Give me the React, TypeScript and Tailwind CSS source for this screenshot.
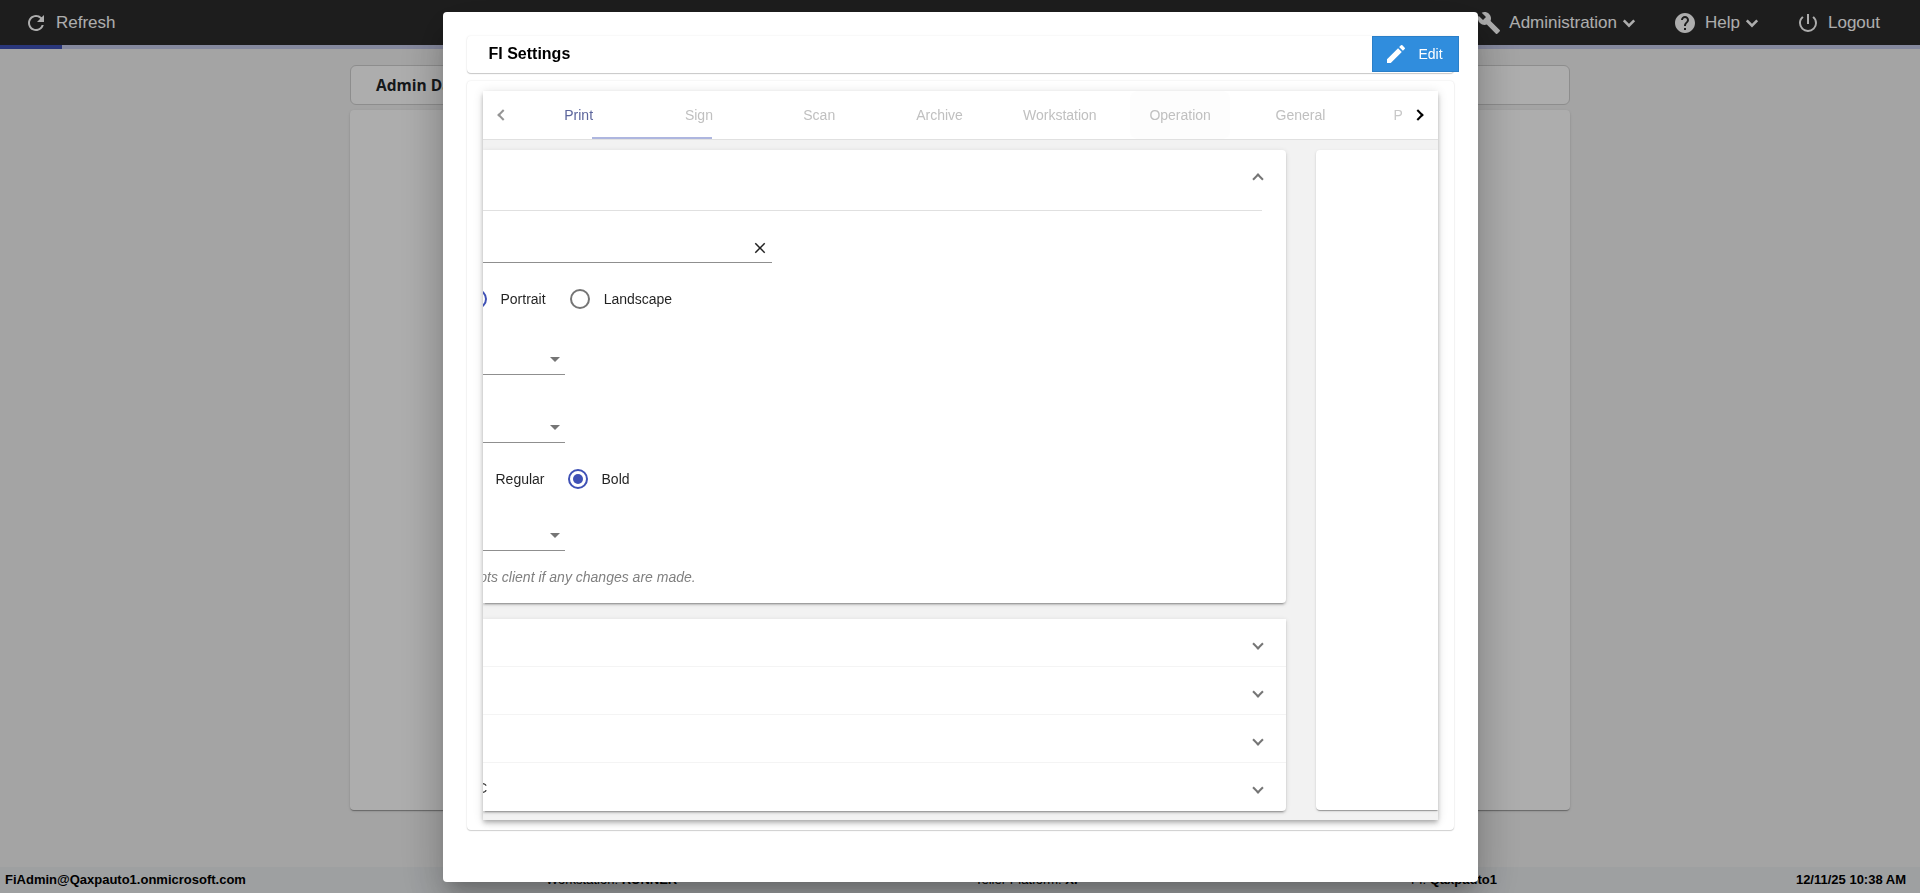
import { useState } from 'react';
import { clsx } from 'clsx';
import {
  MdArrowDropDown,
  MdBuild,
  MdClose,
  MdEdit,
  MdHelp,
  MdPowerSettingsNew,
  MdRefresh,
} from 'react-icons/md';

const TABS = ['Print', 'Sign', 'Scan', 'Archive', 'Workstation', 'Operation', 'General'];

const PANELS = ['', '', '', 'C'];

function MenuArrow() {
  return (
    <svg width="24" height="24" viewBox="0 0 24 24" fill="none" stroke="currentColor" strokeWidth="2.6">
      <path d="M6.8 9.4 12 14.6 17.2 9.4" />
    </svg>
  );
}

function Toolbar() {
  return (
    <header className="flex h-[45px] shrink-0 items-center bg-[#2c2c2c] pb-2 pl-6 pr-10 pt-2 text-[17px] text-white">
      <button className="flex items-center gap-2">
        <MdRefresh size={24} />
        Refresh
      </button>
      <nav className="ml-auto flex items-center">
        <button className="flex items-center">
          <MdBuild size={24} />
          <span className="ml-2">Administration</span>
          <MenuArrow />
        </button>
        <button className="ml-8 flex items-center">
          <MdHelp size={24} />
          <span className="ml-2">Help</span>
          <MenuArrow />
        </button>
        <button className="ml-8 flex items-center">
          <MdPowerSettingsNew size={24} />
          <span className="ml-2">Logout</span>
        </button>
      </nav>
    </header>
  );
}

function StatusBar() {
  return (
    <footer className="mt-auto flex h-[26px] shrink-0 items-center whitespace-nowrap bg-[#e9ecee] pl-[5px] pr-3.5 text-[13px] text-black">
      <b className="w-[541px]">FiAdmin@Qaxpauto1.onmicrosoft.com</b>
      <span className="w-[429px]">
        Workstation: <b>RUNNER</b>
      </span>
      <span className="w-[436px]">
        Teller Platform: <b>XP</b>
      </span>
      <span>
        FI: <b>Qaxpauto1</b>
      </span>
      <b className="ml-auto">12/11/25 10:38 AM</b>
    </footer>
  );
}

function Chevron({ className }: { className: string }) {
  return <span className={clsx('block size-2 shrink-0 border-b-2 border-r-2', className)} />;
}

function Radio({ label, checked, onChange }: { label: string; checked: boolean; onChange: () => void }) {
  return (
    <label className="flex items-center">
      <input type="radio" className="sr-only" checked={checked} onChange={onChange} />
      <span
        className={clsx(
          'flex size-5 items-center justify-center rounded-full border-2',
          checked ? 'border-[#3f51b5]' : 'border-[#757575]',
        )}
      >
        {checked && <span className="size-2.5 rounded-full bg-[#3f51b5]" />}
      </span>
      <span className="ml-3.5">{label}</span>
    </label>
  );
}

function Select() {
  return (
    <div className="flex h-8 w-[82px] items-start justify-end border-b border-[#8f8f8f]">
      <MdArrowDropDown size={24} className="-mr-0.5 mt-1 text-[#757575]" />
    </div>
  );
}

function PrintSettings() {
  const [orientation, setOrientation] = useState('portrait');
  const [weight, setWeight] = useState('bold');

  return (
    <section className="h-[453px] rounded-r bg-white pr-6 shadow-[0_3px_1px_-2px_rgba(0,0,0,0.2),0_2px_2px_0_rgba(0,0,0,0.14),0_1px_5px_0_rgba(0,0,0,0.12)]">
      <div className="flex h-[61px] items-center justify-end border-b border-[#e0e0e0] pb-0.5">
        <Chevron className="rotate-[225deg] border-[#757575]" />
      </div>
      <div className="mt-[26px] flex h-[26px] w-[289px] justify-end border-b border-[#8f8f8f] pr-[3px]">
        <MdClose size={18} className="mt-0.5 text-black/87" />
      </div>
      <div className="-ml-4 mt-[26px] flex h-5 items-center gap-6">
        <Radio label="Portrait" checked={orientation === 'portrait'} onChange={() => setOrientation('portrait')} />
        <Radio label="Landscape" checked={orientation === 'landscape'} onChange={() => setOrientation('landscape')} />
      </div>
      <div className="mt-[34px]">
        <Select />
      </div>
      <div className="mt-9">
        <Select />
      </div>
      <div className="-ml-[21px] mt-[26px] flex h-5 items-center gap-[23px]">
        <Radio label="Regular" checked={weight === 'regular'} onChange={() => setWeight('regular')} />
        <Radio label="Bold" checked={weight === 'bold'} onChange={() => setWeight('bold')} />
      </div>
      <div className="mt-[30px]">
        <Select />
      </div>
      <p className="-ml-[11px] mt-4 text-sm italic text-[#808080]">epts client if any changes are made.</p>
    </section>
  );
}

function SettingsTabs() {
  return (
    <div className="flex h-[729px] flex-col overflow-hidden bg-[#f2f2f2]">
      <div className="flex h-[49px] shrink-0 border-b border-[#e0e0e0] bg-white text-sm">
        <button className="flex w-9 shrink-0 items-center justify-center pl-1">
          <Chevron className="rotate-[135deg] border-[#949494]" />
        </button>
        <div className="relative flex flex-1 overflow-hidden">
          {TABS.map((tab) => (
            <button
              key={tab}
              className={clsx(
                'w-[120.3px] shrink-0',
                tab === 'Print' ? 'text-[#5c659c]' : 'text-[#c0c0c0]',
              )}
            >
              <span
                className={clsx(
                  tab === 'Operation' && 'mx-auto flex h-full w-[100px] items-center justify-center rounded-lg bg-[#fdfdfd]',
                )}
              >
                {tab}
              </span>
            </button>
          ))}
          <button className="w-[120px] shrink-0 pl-[33px] text-left text-[#c8c8c8]">P</button>
          <span className="absolute bottom-0 left-[73px] h-0.5 w-[120px] bg-[#aeb6df]" />
        </div>
        <button className="flex w-9 shrink-0 items-center justify-center pr-1">
          <Chevron className="-rotate-45 border-black" />
        </button>
      </div>

      <div className="flex min-h-0 flex-1 pt-2.5">
        <div className="flex w-[803px] shrink-0 flex-col gap-4 text-sm text-black/87">
          <PrintSettings />
          <section className="rounded-br bg-white shadow-[0_3px_1px_-2px_rgba(0,0,0,0.2),0_2px_2px_0_rgba(0,0,0,0.14),0_1px_5px_0_rgba(0,0,0,0.12)]">
            {PANELS.map((title, i) => (
              <div
                key={i}
                className="flex h-12 items-center justify-between border-b border-[#f4f4f4] pr-6 last:border-b-0"
              >
                <span className="-ml-1.5 mt-0.5 text-[15px]">{title}</span>
                <Chevron className="mt-0.5 rotate-45 border-[#757575]" />
              </div>
            ))}
          </section>
        </div>
        <section className="ml-[30px] h-[660px] flex-1 rounded-l bg-white shadow-[0_2px_1px_-1px_rgba(0,0,0,0.2),0_1px_1px_0_rgba(0,0,0,0.14),0_1px_3px_0_rgba(0,0,0,0.12)]" />
      </div>
    </div>
  );
}

function SettingsDialog() {
  return (
    <div
      role="dialog"
      className="h-[870px] w-[1035px] rounded bg-white p-6 shadow-[0_11px_15px_-7px_rgba(0,0,0,0.2),0_24px_38px_3px_rgba(0,0,0,0.14),0_9px_46px_8px_rgba(0,0,0,0.12)]"
    >
      <div className="flex h-[37px] items-start justify-between rounded pl-[22px] shadow-[0_1px_1px_0_rgba(0,0,0,0.2),0_0_2px_0_rgba(0,0,0,0.1)]">
        <h2 className="mt-1.5 text-base font-bold leading-6 text-black">FI Settings</h2>
        <button className="-mr-[5px] flex h-9 w-[87px] items-center border border-[#2a7fc8] bg-[#308ddd] pb-px pl-[11px] text-sm text-white">
          <MdEdit size={24} />
          <span className="ml-[11px]">Edit</span>
        </button>
      </div>
      <div className="mt-2 h-[749px] rounded px-4 pt-2.5 shadow-[0_1px_1px_0_rgba(0,0,0,0.16),0_0_2px_0_rgba(0,0,0,0.12)]">
        <div className="shadow-[0_2px_4px_-1px_rgba(0,0,0,0.2),0_4px_5px_0_rgba(0,0,0,0.14),0_1px_10px_0_rgba(0,0,0,0.12)]">
          <SettingsTabs />
        </div>
      </div>
    </div>
  );
}

export default function App() {
  return (
    <div className="h-[893px] overflow-hidden font-['Liberation_Sans',Arial,sans-serif]">
      <div className="flex h-full flex-col bg-[#f2f2f2]">
        <Toolbar />
        <div className="h-1 shrink-0 bg-[#c5cae9]">
          <div className="h-full w-[62px] bg-[#3f51b5]" />
        </div>
        <main className="mx-auto mt-4 w-[1220px]">
          <h1 className="flex h-10 items-center rounded-md border border-[#d0d0d0] bg-white pl-[25px] pt-0.5 font-['Open_Sans',sans-serif] text-[15.5px] font-bold text-[#212529]">
            Admin Dashboard
          </h1>
          <div className="mt-[5px] h-[700px] rounded bg-white shadow-[0_2px_1px_-1px_rgba(0,0,0,0.2),0_1px_1px_0_rgba(0,0,0,0.14),0_1px_3px_0_rgba(0,0,0,0.12)]" />
        </main>
        <StatusBar />
      </div>

      <div className="fixed inset-0 flex items-start justify-center bg-black/32 pt-3">
        <SettingsDialog />
      </div>
    </div>
  );
}
